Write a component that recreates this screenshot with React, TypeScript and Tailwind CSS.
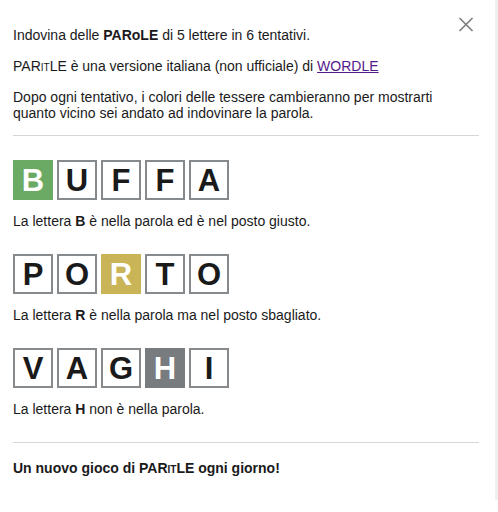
import React from "react";

type Tile = { l: string; c?: "g" | "y" | "x" };

const Row = ({ tiles }: { tiles: Tile[] }) => (
  <div className="flex gap-[4px]">
    {tiles.map((t, i) => {
      const cls =
        t.c === "g"
          ? "bg-[#6aaa64] border-[#6aaa64] text-white"
          : t.c === "y"
          ? "bg-[#c9b458] border-[#c9b458] text-white"
          : t.c === "x"
          ? "bg-[#787c7e] border-[#787c7e] text-white"
          : "bg-white border-[#878a8c] text-[#1a1a1b]";
      return (
        <div
          key={i}
          className={`w-[40px] h-[40px] border-2 flex items-center justify-center text-[31px] font-bold leading-none ${cls}`}
        >
          {t.l}
        </div>
      );
    })}
  </div>
);

const It = () => <span className="[font-variant:small-caps]">it</span>;

export default function App() {
  return (
    <div
      className="w-[498px] h-[512px] bg-white flex text-[#1a1a1b]"
      style={{ fontFamily: '"Liberation Sans", Arial, sans-serif' }}
    >
      <div className="flex-1 relative pl-[13px] pr-[16px] pt-[27px] text-[14px] leading-[16px]">
        <button className="absolute right-[21px] top-[17px] w-[16px] h-[15px] text-[#808080]">
          <svg viewBox="0 0 16 15" width="16" height="15" fill="none" stroke="currentColor" strokeWidth="1.7">
            <line x1="1.5" y1="1" x2="14.5" y2="14" />
            <line x1="14.5" y1="1" x2="1.5" y2="14" />
          </svg>
        </button>
        <p>
          Indovina delle <b>PARoLE</b> di 5 lettere in 6 tentativi.
        </p>
        <p className="mt-[15px]">
          PAR<It />LE è una versione italiana (non ufficiale) di{" "}
          <a className="underline text-[#551a8b]" href="#">WORDLE</a>
        </p>
        <p className="mt-[15px]">
          Dopo ogni tentativo, i colori delle tessere cambieranno per mostrarti quanto vicino sei andato ad
          indovinare la parola.
        </p>
        <div className="mt-[14px] h-px bg-[#d3d6da]" />
        <div className="mt-[24px]">
          <Row tiles={[{ l: "B", c: "g" }, { l: "U" }, { l: "F" }, { l: "F" }, { l: "A" }]} />
          <p className="mt-[13px]">
            La lettera <b>B</b> è nella parola ed è nel posto giusto.
          </p>
        </div>
        <div className="mt-[25px]">
          <Row tiles={[{ l: "P" }, { l: "O" }, { l: "R", c: "y" }, { l: "T" }, { l: "O" }]} />
          <p className="mt-[13px]">
            La lettera <b>R</b> è nella parola ma nel posto sbagliato.
          </p>
        </div>
        <div className="mt-[25px]">
          <Row tiles={[{ l: "V" }, { l: "A" }, { l: "G" }, { l: "H", c: "x" }, { l: "I" }]} />
          <p className="mt-[13px]">
            La lettera <b>H</b> non è nella parola.
          </p>
        </div>
        <div className="mt-[25px] h-px bg-[#d3d6da]" />
        <p className="mt-[17px] font-bold">
          Un nuovo gioco di PAR<It />LE ogni giorno!
        </p>
      </div>
      <div className="w-[3px] h-[500px] bg-[#f0f0f0]" />
    </div>
  );
}
